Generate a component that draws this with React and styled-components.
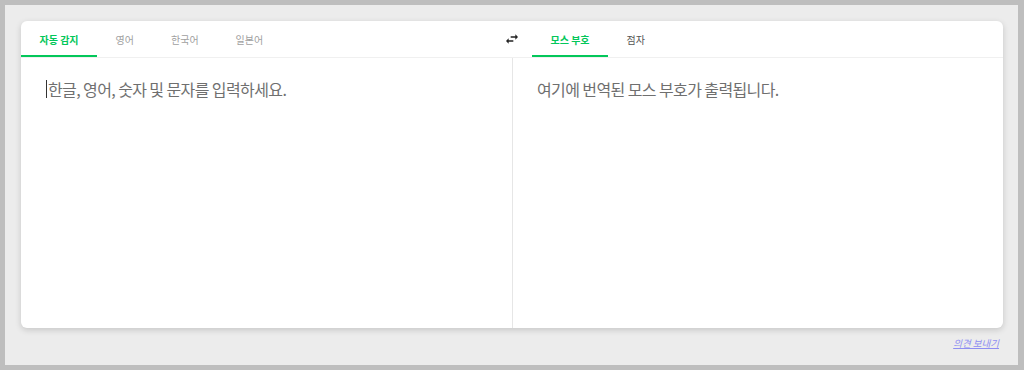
import styled, { createGlobalStyle } from 'styled-components'

const GlobalStyle = createGlobalStyle`
    html, body {
        margin: 0;
        padding: 0;
    }
    body {
        font-family: "Noto Sans CJK KR", "Noto Sans", sans-serif;
    }
`

const Page = styled.div`
    box-sizing: border-box;
    width: 1024px;
    height: 370px;
    border: 5px solid #bebebe;
    border-right-width: 6px;
    background-color: #ececec;
    padding: 16px 15px 0 16px;
`

const Card = styled.div`
    height: 307px;
    background-color: #FFF;
    border-radius: 6px;
    box-shadow: 0 2px 6px rgba(0, 0, 0, 0.16);
    display: flex;
    flex-direction: column;
    overflow: hidden;
`

const Header = styled.div`
    display: grid;
    grid-template-columns: 1fr 24px 1fr;
    height: 36px;
    border-bottom: 1px solid #f0f0f0;
`

const Tabs = styled.div`
    display: flex;
    padding-left: ${props => props.$offset || 0}px;
`

const Tab = styled.div`
    box-sizing: border-box;
    height: 36px;
    padding: 2px 18.5px 0;
    display: flex;
    align-items: center;
    font-size: 10px;
    font-weight: ${props => props.$active ? 700 : 400};
    color: ${props => props.$active ? '#03c75a' : props.$color || '#a0a0a0'};
    border-bottom: 2px solid ${props => props.$active ? '#03c75a' : 'transparent'};
    white-space: nowrap;
`

const SwapButton = styled.div`
    display: flex;
    align-items: center;
    justify-content: center;
    color: #222;
    padding-bottom: 1px;
`

const Body = styled.div`
    flex: 1;
    display: grid;
    grid-template-columns: 1fr 1fr;
`

const Panel = styled.div`
    padding: 21px 25px 0 ${props => props.$divider ? 24 : 25}px;
    border-left: ${props => props.$divider ? '1px solid #e6e6e6' : 'none'};
    display: flex;
    align-items: flex-start;
`

const Caret = styled.span`
    width: 1px;
    height: 18px;
    margin-top: 1px;
    margin-right: 1px;
    background-color: #333;
`

const Placeholder = styled.div`
    font-size: 16px;
    line-height: 20px;
    letter-spacing: -0.6px;
    color: #6f6f6f;
`

const Footer = styled.div`
    display: flex;
    justify-content: flex-end;
    padding: 8px 4px 0 0;
`

const FeedbackLink = styled.a`
    font-size: 9.5px;
    font-style: italic;
    color: #8e8ef2;
    text-decoration: underline;
`

function SwapIcon () {
    return (
        <svg width="16" height="16" viewBox="0 0 24 24" fill="currentColor">
            <path d="M6.99 11L3 15l3.99 4v-3H14v-2H6.99v-3zM21 9l-3.99-4v3H10v2h7.01v3L21 9z" />
        </svg>
    )
}

function App () {
    return (
        <>
            <GlobalStyle />
            <Page>
                <Card>
                    <Header>
                        <Tabs>
                            <Tab $active>자동 감지</Tab>
                            <Tab>영어</Tab>
                            <Tab>한국어</Tab>
                            <Tab>일본어</Tab>
                        </Tabs>
                        <SwapButton>
                            <SwapIcon />
                        </SwapButton>
                        <Tabs $offset={8}>
                            <Tab $active>모스 부호</Tab>
                            <Tab $color="#555">점자</Tab>
                        </Tabs>
                    </Header>
                    <Body>
                        <Panel>
                            <Caret />
                            <Placeholder>한글, 영어, 숫자 및 문자를 입력하세요.</Placeholder>
                        </Panel>
                        <Panel $divider>
                            <Placeholder>여기에 번역된 모스 부호가 출력됩니다.</Placeholder>
                        </Panel>
                    </Body>
                </Card>
                <Footer>
                    <FeedbackLink>의견 보내기</FeedbackLink>
                </Footer>
            </Page>
        </>
    )
}

export default App
